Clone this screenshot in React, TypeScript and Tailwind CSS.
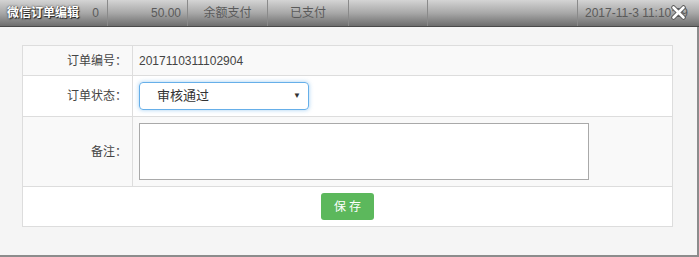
const font = { fontFamily: '"Liberation Sans", "Noto Sans CJK SC", sans-serif' }

const App: React.FC = () => {
  return (
    <div className="w-[699px] h-[257px] bg-[#f5f5f5] flex flex-col text-[12px] text-[#333]" style={font}>
      <header className="relative h-[27px] shrink-0 flex bg-gradient-to-b from-[#d4d4d4] via-[#a8a8a8] to-[#6e6e6e] border-b border-[#4a4a4a] text-[12px] text-[#5a5a5a]">
        <div className="w-[108px] flex items-center justify-between pl-[7px] pr-[8px] border-r border-[#8a8a8a]">
          <span className="font-bold text-white [text-shadow:0_0_2px_#222,1px_1px_1px_#222]">微信订单编辑</span>
          <span>0</span>
        </div>
        <div className="w-[80px] flex items-center justify-end pr-[6px] border-r border-[#8a8a8a]">50.00</div>
        <div className="w-[80px] flex items-center justify-center border-r border-[#8a8a8a]">余额支付</div>
        <div className="w-[81px] flex items-center justify-center border-r border-[#8a8a8a]">已支付</div>
        <div className="w-[79px] border-r border-[#8a8a8a]" />
        <div className="w-[150px] border-r border-[#8a8a8a]" />
        <div className="flex-1 flex items-center pl-[7px] whitespace-nowrap overflow-hidden">2017-11-3 11:10:29</div>
        <svg className="absolute right-[13px] top-[5px]" width="15" height="15" viewBox="0 0 15 15">
          <path d="M2.5 2.5 L12.5 12.5 M12.5 2.5 L2.5 12.5" stroke="#555" strokeWidth="4.5" strokeLinecap="round" />
          <path d="M2.5 2.5 L12.5 12.5 M12.5 2.5 L2.5 12.5" stroke="#fff" strokeWidth="2.6" strokeLinecap="round" />
        </svg>
      </header>
      <div className="flex-1 border-r-2 border-b-2 border-[#8c8c8c] pl-[22px] pr-[24px] pt-[18px]">
        <div className="border border-[#dddddd] bg-white text-[#444]">
          <div className="flex h-[30px] bg-[#f9f9f9] border-b border-[#dddddd]">
            <div className="w-[110px] border-r border-[#dddddd] flex items-center justify-end pr-[5px]">订单编号：</div>
            <div className="flex-1 flex items-center pl-[6px]">2017110311102904</div>
          </div>
          <div className="flex h-[41px] border-b border-[#dddddd]">
            <div className="w-[110px] border-r border-[#dddddd] flex items-center justify-end pr-[5px]">订单状态：</div>
            <div className="flex-1 flex items-center pl-[6px]">
              <div className="w-[170px] h-[28px] rounded-[4px] border border-[#66afe9] shadow-[0_0_4px_rgba(102,175,233,0.6)] flex items-center justify-between pl-[17px] pr-[7px] text-[13px] text-[#333]">
                <span>审核通过</span>
                <span className="text-[8px] text-[#333]">▼</span>
              </div>
            </div>
          </div>
          <div className="flex h-[70px] bg-[#f9f9f9] border-b border-[#dddddd]">
            <div className="w-[110px] border-r border-[#dddddd] flex items-center justify-end pr-[5px]">备注：</div>
            <div className="flex-1 pl-[6px] pt-[6px]">
              <div className="w-[450px] h-[57px] bg-white border border-[#a9a9a9]" />
            </div>
          </div>
          <div className="h-[39px] flex items-center justify-center">
            <button className="w-[53px] h-[27px] rounded-[3px] bg-[#5cb85c] text-white text-[12px] tracking-[3px] pl-[3px]">保存</button>
          </div>
        </div>
      </div>
    </div>
  )
}

export default App
